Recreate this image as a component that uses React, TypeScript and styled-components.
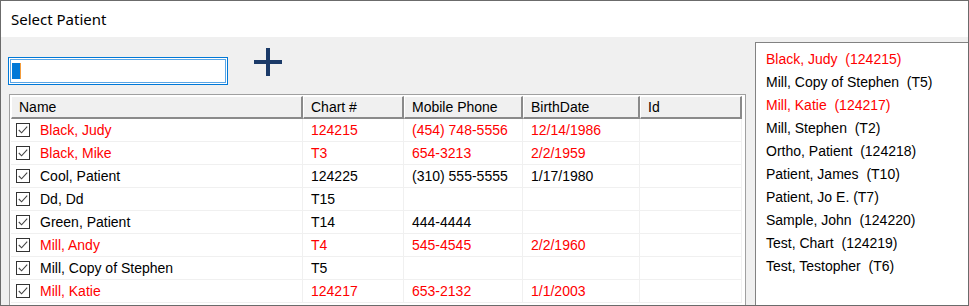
import React from "react";
import styled, { createGlobalStyle } from "styled-components";

const GlobalStyle = createGlobalStyle`
  html, body {
    margin: 0;
    padding: 0;
    background: #ffffff;
  }
  body {
    font-family: "Liberation Sans", Arial, sans-serif;
    font-size: 14px;
    overflow: hidden;
  }
`;

type Patient = {
  name: string;
  chart: string;
  phone: string;
  birth: string;
  flagged: boolean;
};

const patients: Patient[] = [
  { name: "Black, Judy", chart: "124215", phone: "(454) 748-5556", birth: "12/14/1986", flagged: true },
  { name: "Black, Mike", chart: "T3", phone: "654-3213", birth: "2/2/1959", flagged: true },
  { name: "Cool, Patient", chart: "124225", phone: "(310) 555-5555", birth: "1/17/1980", flagged: false },
  { name: "Dd, Dd", chart: "T15", phone: "", birth: "", flagged: false },
  { name: "Green, Patient", chart: "T14", phone: "444-4444", birth: "", flagged: false },
  { name: "Mill, Andy", chart: "T4", phone: "545-4545", birth: "2/2/1960", flagged: true },
  { name: "Mill, Copy of Stephen", chart: "T5", phone: "", birth: "", flagged: false },
  { name: "Mill, Katie", chart: "124217", phone: "653-2132", birth: "1/1/2003", flagged: true },
];

const recent = [
  { label: "Black, Judy  (124215)", flagged: true },
  { label: "Mill, Copy of Stephen  (T5)", flagged: false },
  { label: "Mill, Katie  (124217)", flagged: true },
  { label: "Mill, Stephen  (T2)", flagged: false },
  { label: "Ortho, Patient  (124218)", flagged: false },
  { label: "Patient, James  (T10)", flagged: false },
  { label: "Patient, Jo E. (T7)", flagged: false },
  { label: "Sample, John  (124220)", flagged: false },
  { label: "Test, Chart  (124219)", flagged: false },
  { label: "Test, Testopher  (T6)", flagged: false },
];

const COLS = "292px 101px 119px 117px 102px";

const Window = styled.div`
  width: 969px;
  height: 306px;
  box-sizing: border-box;
  border: 1px solid #6b6b6b;
  display: flex;
  flex-direction: column;
  overflow: hidden;
`;

const TitleBar = styled.div`
  height: 35px;
  flex: none;
  background: #ffffff;
  display: flex;
  align-items: center;
  padding-left: 10px;
  padding-bottom: 1px;
  font-family: "Noto Sans", "Open Sans", sans-serif;
  font-size: 15px;
  color: #000;
`;

const Body = styled.div`
  flex: 1;
  background: #f0f0f0;
  display: flex;
  min-height: 0;
`;

const LeftPane = styled.div`
  width: 746px;
  flex: none;
  padding-left: 7px;
  box-sizing: border-box;
  display: flex;
  flex-direction: column;
`;

const SearchRow = styled.div`
  display: flex;
  align-items: flex-start;
  height: 57px;
  flex: none;
`;

const SearchBox = styled.div`
  margin-top: 20px;
  width: 220px;
  height: 28px;
  box-sizing: border-box;
  background: #fff;
  border: 1px solid #0078d7;
  box-shadow: inset 0 0 0 1px #ffffff, inset 0 0 0 2px #5aa6e6;
  display: flex;
  align-items: center;
  padding-left: 3px;
`;

const Selection = styled.span`
  width: 8px;
  height: 16px;
  background: #0078d7;
  border-right: 1px solid #f39c3c;
`;

const AddButton = styled.button`
  margin-top: 10px;
  margin-left: 25px;
  width: 30px;
  height: 30px;
  padding: 0;
  border: none;
  background: transparent;
  display: flex;
  align-items: center;
  justify-content: center;
  color: #1b3a68;
`;

const Grid = styled.div`
  margin-left: 1px;
  width: 737px;
  flex: 1;
  box-sizing: border-box;
  border: 1px solid #a0a0a0;
  border-bottom: none;
  background: #ffffff;
  padding: 1px 2px 0 1px;
  overflow: hidden;
`;

const HeaderRow = styled.div`
  display: grid;
  grid-template-columns: ${COLS};
  height: 23px;
`;

const HeaderCell = styled.div`
  background: #f0f0f0;
  box-sizing: border-box;
  border-top: 1px solid #ffffff;
  border-left: 1px solid #ffffff;
  border-right: 2px solid #8a8a8a;
  border-bottom: 2px solid #8a8a8a;
  display: flex;
  align-items: center;
  padding-left: 7px;
  color: #000;
  white-space: nowrap;
`;

const Row = styled.div<{ $flagged: boolean }>`
  display: grid;
  grid-template-columns: ${COLS};
  height: 23px;
  color: ${(p) => (p.$flagged ? "#ff0000" : "#000000")};
`;

const Cell = styled.div`
  box-sizing: border-box;
  border-right: 1px solid #f0f0f0;
  border-bottom: 1px solid #f0f0f0;
  display: flex;
  align-items: center;
  padding-left: 8px;
  white-space: nowrap;
`;

const NameCell = styled(Cell)`
  padding-left: 5px;
  gap: 10px;
`;

const Check = styled.span`
  width: 14px;
  height: 14px;
  flex: none;
  box-sizing: border-box;
  border: 1px solid #333333;
  background: #fff;
  display: flex;
  align-items: center;
  justify-content: center;
`;

const ListBox = styled.div`
  margin-top: 5px;
  margin-left: 8px;
  flex: 1;
  background: #ffffff;
  border-top: 1px solid #828282;
  border-left: 1px solid #828282;
  padding: 5px 0 0 10px;
  display: flex;
  flex-direction: column;
`;

const ListItem = styled.div<{ $flagged: boolean }>`
  height: 23px;
  line-height: 23px;
  white-space: pre;
  color: ${(p) => (p.$flagged ? "#ff0000" : "#000000")};
`;

function CheckMark() {
  return (
    <Check>
      <svg width="12" height="12" viewBox="0 0 12 12">
        <path d="M1.8 6 L4.6 8.8 L10.2 2.6" fill="none" stroke="#444" strokeWidth="1.1" />
      </svg>
    </Check>
  );
}

function PlusIcon() {
  return (
    <svg width="28" height="28" viewBox="0 0 28 28">
      <rect x="12" y="0" width="4" height="28" fill="currentColor" />
      <rect x="0" y="12" width="28" height="4" fill="currentColor" />
    </svg>
  );
}

export default function App() {
  return (
    <>
      <GlobalStyle />
      <Window>
        <TitleBar>Select Patient</TitleBar>
        <Body>
          <LeftPane>
            <SearchRow>
              <SearchBox>
                <Selection />
              </SearchBox>
              <AddButton>
                <PlusIcon />
              </AddButton>
            </SearchRow>
            <Grid>
              <HeaderRow>
                <HeaderCell>Name</HeaderCell>
                <HeaderCell>Chart #</HeaderCell>
                <HeaderCell>Mobile Phone</HeaderCell>
                <HeaderCell>BirthDate</HeaderCell>
                <HeaderCell>Id</HeaderCell>
              </HeaderRow>
              {patients.map((p) => (
                <Row key={p.name} $flagged={p.flagged}>
                  <NameCell>
                    <CheckMark />
                    {p.name}
                  </NameCell>
                  <Cell>{p.chart}</Cell>
                  <Cell>{p.phone}</Cell>
                  <Cell>{p.birth}</Cell>
                  <Cell />
                </Row>
              ))}
            </Grid>
          </LeftPane>
          <ListBox>
            {recent.map((r) => (
              <ListItem key={r.label} $flagged={r.flagged}>
                {r.label}
              </ListItem>
            ))}
          </ListBox>
        </Body>
      </Window>
    </>
  );
}
